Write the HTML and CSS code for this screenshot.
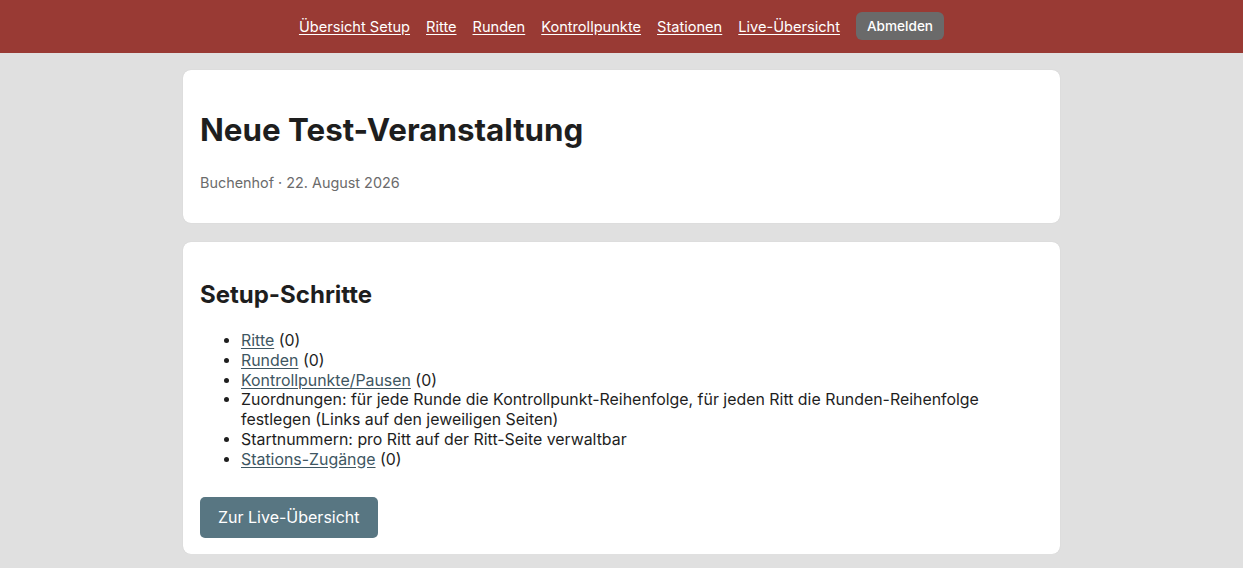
FILE: index.html
```html
<!DOCTYPE html>
<html lang="de">
<head>
    <meta charset="UTF-8">
    <meta name="viewport" content="width=device-width, initial-scale=1.0">
    <title>Übersicht Setup</title>
    <link rel="stylesheet" href="styles.css">
</head>
<body>

    <!-- Navigation -->
    <header class="topbar">
        <nav class="nav">
            <a href="#">Übersicht Setup</a>
            <a href="#">Ritte</a>
            <a href="#">Runden</a>
            <a href="#">Kontrollpunkte</a>
            <a href="#">Stationen</a>
            <a href="#">Live-Übersicht</a>
            <button class="logout">Abmelden</button>
        </nav>
    </header>

    <main class="container">
        <!-- Veranstaltung -->
        <section class="card">
            <h1>Neue Test-Veranstaltung</h1>
            <p class="meta">Buchenhof · 22. August 2026</p>
        </section>

        <!-- Setup-Schritte -->
        <section class="card">
            <h2>Setup-Schritte</h2>
            <ul class="steps">
                <li><a href="#">Ritte</a> (0)</li>
                <li><a href="#">Runden</a> (0)</li>
                <li><a href="#">Kontrollpunkte/Pausen</a> (0)</li>
                <li>Zuordnungen: für jede Runde die Kontrollpunkt-Reihenfolge, für jeden Ritt die Runden-Reihenfolge festlegen (Links auf den jeweiligen Seiten)</li>
                <li>Startnummern: pro Ritt auf der Ritt-Seite verwaltbar</li>
                <li><a href="#">Stations-Zugänge</a> (0)</li>
            </ul>
            <a href="#" class="btn">Zur Live-Übersicht</a>
        </section>
    </main>

</body>
</html>
```

FILE: styles.css
```css
/* Grundlayout */
body {
    margin: 0;
    background: #e0e0e0;
    font-family: Inter, "Noto Sans", Arial, sans-serif;
    color: #1e1e1e;
}

/* Kopfleiste */
.topbar {
    background: #993a34;
    height: 53px;
    display: flex;
    align-items: center;
    justify-content: center;
}

.nav {
    display: flex;
    align-items: center;
    gap: 16px;
}

.nav a {
    color: #fff;
    font-size: 14.6px;
    text-decoration: underline;
    text-underline-offset: 2px;
}

.logout {
    background: #6a6a6a;
    color: #fff;
    border: none;
    border-radius: 6px;
    font-family: inherit;
    font-size: 13.6px;
    font-weight: 500;
    padding: 5px 11px;
    height: 28px;
    margin-top: -2px;
}

/* Inhalt */
.container {
    width: 877px;
    margin: 17px auto 0;
    display: flex;
    flex-direction: column;
    gap: 19px;
}

.card {
    background: #fff;
    border-radius: 8px;
    padding: 17px 17px 16px;
    box-shadow: 0 0 1px rgba(0, 0, 0, 0.15);
}

.card h1 {
    font-size: 31.3px;
    font-weight: 700;
    margin: 25px 0 0;
    line-height: 1.2;
}

.meta {
    color: #6b6b6b;
    font-size: 14.4px;
    margin: 24px 0 16px;
}

.card h2 {
    font-size: 24px;
    font-weight: 700;
    margin: 22px 0 0;
    line-height: 1.2;
}

.steps {
    margin: 22px 0 0;
    padding-left: 41px;
    font-size: 15.9px;
    line-height: 19.7px;
}

.steps a {
    color: #3e5662;
    text-underline-offset: 2px;
}

.btn {
    display: inline-block;
    margin-top: 28px;
    background: #587682;
    color: #fff;
    text-decoration: none;
    font-size: 16px;
    padding: 0 18px;
    height: 41px;
    line-height: 41px;
    border-radius: 5px;
}
```
